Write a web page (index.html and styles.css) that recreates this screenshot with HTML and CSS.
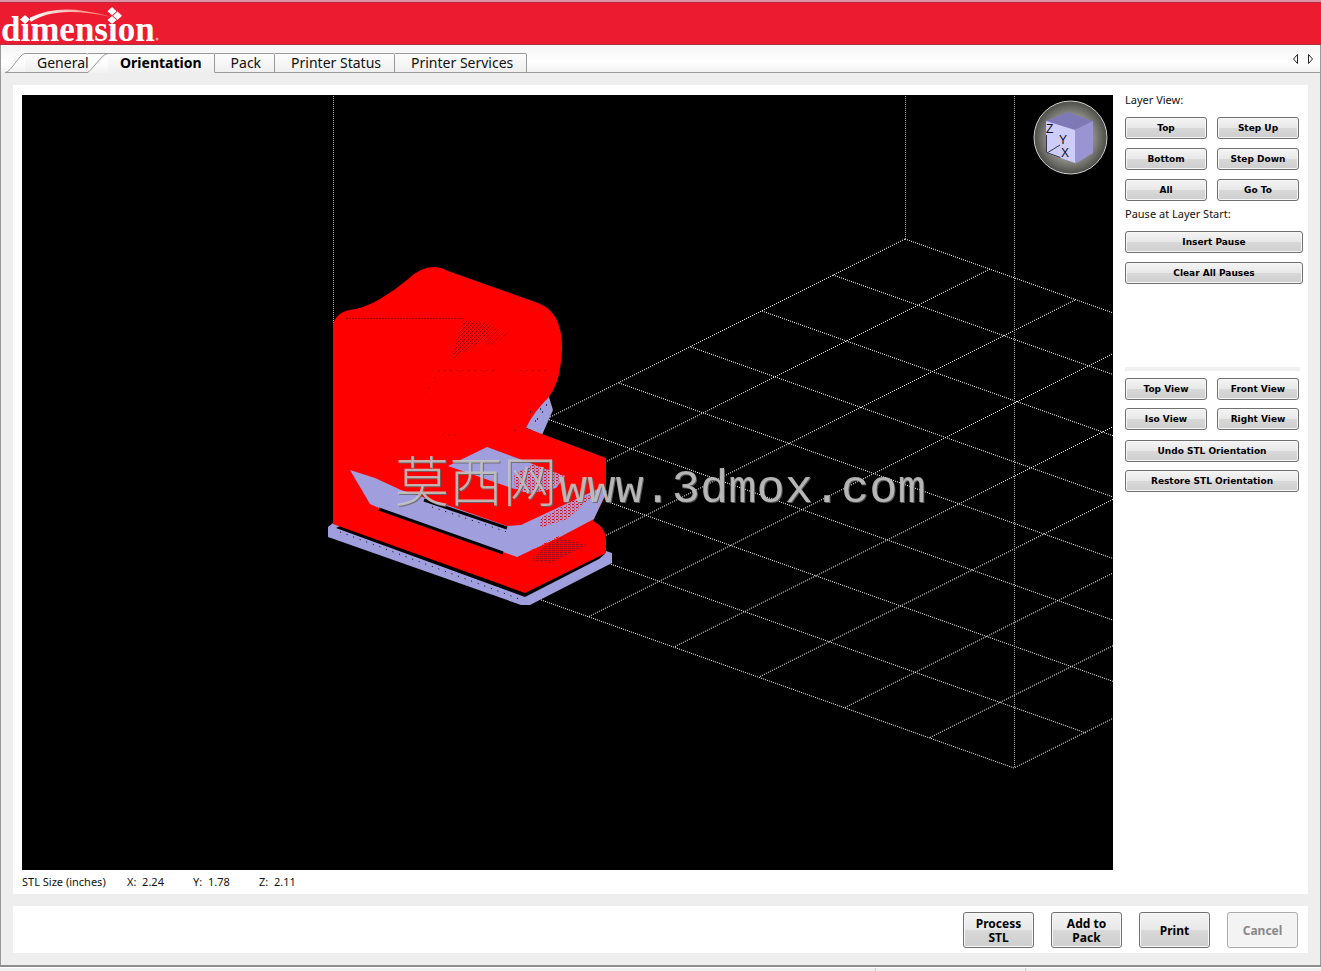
FILE: index.html
```html
<!DOCTYPE html>
<html lang="en">
<head>
<meta charset="utf-8">
<title>Dimension</title>
<link rel="stylesheet" href="styles.css">
</head>
<body>
<div class="window">
  <header class="brand">
    <svg class="logo" width="164" height="42" viewBox="0 3 164 42" role="img" aria-label="dimension">
      <defs>
        <linearGradient id="arc"><stop offset="0" stop-color="#fff"/><stop offset=".5" stop-color="#fbb9ae"/><stop offset="1" stop-color="#f4705f"/></linearGradient>
      </defs>
      <path d="M29 18Q54 6 84 11Q100 13 111 17Q88 12 70 12Q45 12 31 22Z" fill="url(#arc)"/>
      <text class="logo-text" x="1" y="41">dimension</text>
      <circle cx="157" cy="39" r="1.5" fill="#f79a98"/>
      <rect class="dot-mask" x="20" y="15" width="10" height="9"/>
      <rect class="dot-mask" x="109" y="15" width="10" height="9"/>
      <path d="M25 15l5 4.500-5 4.500-5-4.500zM112 7l4.500 4.200-4.500 4.200-4.500-4.200zM117.500 11.500l4.500 4.200-4.500 4.200-4.500-4.200zM112 16l4.500 4-4.500 4-4.500-4z" fill="#fff"/>
    </svg>
  </header>

  <nav class="tabs" aria-label="Sections">
    <svg class="slant" width="20" height="20" viewBox="0 0 20 20"><path d="M0 19.500H20M0 19.500Q3 19 5 16.500L15 4Q18 .5 20 .5" /></svg>
    <button class="tab first" type="button">General</button>
    <svg class="slant" width="20" height="20" viewBox="0 0 20 20"><path d="M0 .5H20M-1 19.500Q1 19 3 16.500L13 5Q17 .5 20 .5" /></svg>
    <button class="tab current" type="button">Orientation</button>
    <button class="tab" type="button">Pack</button>
    <button class="tab" type="button">Printer Status</button>
    <button class="tab" type="button">Printer Services</button>
    <div class="tab-rest">
      <button class="scroll" type="button" aria-label="Previous tab"><svg width="7" height="10" viewBox="0 0 7 10"><path d="M5.500 .5v9L1.500 5z"/></svg></button>
      <button class="scroll" type="button" aria-label="Next tab"><svg width="7" height="10" viewBox="0 0 7 10"><path d="M1.500 .5v9l4-4.500z"/></svg></button>
    </div>
  </nav>

  <div class="body">
  <main class="panel">
    <section class="stage">
      <svg class="view" viewBox="22 95 1091 775" role="img" aria-label="Model preview">
        <defs>
          <radialGradient id="ball"><stop offset="0" stop-color="#a8a8a4"/><stop offset=".6" stop-color="#92928a"/><stop offset="1" stop-color="#4c4c48"/></radialGradient>
          <pattern id="hatch" width="4" height="4" patternUnits="userSpaceOnUse"><path d="M0 4L4 0" stroke="#700" stroke-width=".8"/></pattern>
          <pattern id="speck" width="4" height="3" patternUnits="userSpaceOnUse"><path d="M0 .5h2M2 2h1" stroke="#f00"/></pattern>
          <pattern id="rows" width="4" height="2" patternUnits="userSpaceOnUse"><path d="M0 .5h3" stroke="#8c1020" stroke-width=".8"/></pattern>
        </defs>
        <rect x="22" y="95" width="1091" height="775"/>
        <g class="grid">
          <path class="across" d="M905 239l681 242M833 275l681 242M762 311l681 242M691 347l681 242M619 383l681 242M547 419l681 242M476 455l681 242M405 491l681 242M333 526l681 242"/>
          <path class="down" d="M905 239l-572 287M990 269l-572 287M1075 300l-572 287M1160 330l-572 287M1246 360l-572 287M1331 390l-572 287M1416 421l-572 287M1501 451l-572 287M1586 481l-572 287"/>
        </g>
        <g class="posts"><path d="M333.500 96V526M905.500 96V239M1014.500 96V768"/></g>

        <path fill="#a09edc" d="M328 527l5-4 9 4 183 66 81-42 6 2v10l-82 42h-9L328 537z"/>
        <path fill="#000" d="M336 528l4-2 186 66 77-39 2 1-6 5-74 38z"/>
        <path fill="#a09edc" d="M548 394l5 16-11 25-17-8 4-11 11-10z"/>
        <path fill="#f00" d="M333 524V328q0-9 7-14 5-4 16-5 12-3 24-10 14-8 27-19 13-13 27-13 7 0 14 4l90 32q16 6 21 23 5 15 2 36-2 22-13 36-15 15-22 30l80 30v39l-13 24q13 6 13 20v12l-81 40z"/>
        <path fill="#000" d="M607 493l-13 25 6 3 10-8z"/>
        <path fill="#a09edc" d="M448 466l39-19 78 29-9 12-27 6z"/>
        <path fill="url(#speck)" d="M514 475l24-14 28 15-24 20-27-3z"/>
        <path fill="#a09edc" d="M350 470l25 8 26 12 40 13 66 23 14-1 79-37 7 3-13 28-34 18-43 20-17-6-121-43-9-4z"/>
        <path fill="url(#speck)" d="M541 518l34-18 22-7-30 26-27 9zM522 555l36-19 31 2-36 18-33 11z"/>
        <path d="M379 509l124 44M424 500l83 28" stroke="#000" stroke-width="3" fill="none"/>
        <path d="M432 507l78 26M340 532l182 68" stroke="#000" stroke-dasharray="1 6" fill="none"/>
        <path fill="url(#rows)" d="M544 547l17-9 26 7-36 18-20-3z"/>
        <path fill="url(#hatch)" d="M463 320l27 4-3 14-35 21z"/>
        <path fill="url(#hatch)" fill-opacity=".5" d="M488 324l20 10-18 14-6-8z"/>
        <path d="M346 318.500H464" stroke="#900" stroke-dasharray="2 1"/>
        <path d="M438 370.500h56M520 370.500h28M425 394l12-20M442 435h16M514 431l8-6" stroke="#b00" stroke-dasharray="2 4" fill="none"/>
        <path d="M530 412h1M537 419h1M542 412h1M546 405h1M535 421h1M540 409h1" stroke="#113" stroke-width="1.500"/>

        <circle cx="1070.500" cy="137.500" r="36.500" fill="url(#ball)" stroke="#d0d0cc"/>
        <path fill="#7f79b8" d="M1046 121l22-9 25 9-20 10z"/>
        <path fill="#ceccf8" d="M1046 121l29 9v33l-29-10z"/>
        <path fill="#9a94d2" d="M1075 130l18-9v32l-18 11z"/>
        <path d="M1046.500 135v17.500l14 5M1047 153l13-8" stroke="#334" fill="none"/>
        <g class="axes"><text x="1046" y="133">Z</text><text x="1059" y="144">Y</text><text x="1061" y="157">X</text></g>
        <text class="mark"><tspan class="mark-cjk" x="395" y="502">莫西网</tspan><tspan class="mark-latin" x="559" y="502">www.3dmox.com</tspan></text>
      </svg>
      <div class="sizes"><span>STL Size (inches)</span><span>X:  2.24</span><span>Y:  1.78</span><span>Z:  2.11</span></div>
    </section>

    <aside class="side">
      <h2 class="caption">Layer View:</h2>
      <div class="pairs">
        <button class="btn" type="button">Top</button><button class="btn" type="button">Step Up</button>
        <button class="btn" type="button">Bottom</button><button class="btn" type="button">Step Down</button>
        <button class="btn" type="button">All</button><button class="btn" type="button">Go To</button>
      </div>
      <h2 class="caption">Pause at Layer Start:</h2>
      <div class="stack pauses">
        <button class="btn" type="button">Insert Pause</button>
        <button class="btn" type="button">Clear All Pauses</button>
      </div>
      <hr class="rule">
      <div class="pairs views">
        <button class="btn" type="button">Top View</button><button class="btn" type="button">Front View</button>
        <button class="btn" type="button">Iso View</button><button class="btn" type="button">Right View</button>
      </div>
      <div class="stack orient">
        <button class="btn" type="button">Undo STL Orientation</button>
        <button class="btn" type="button">Restore STL Orientation</button>
      </div>
    </aside>
  </main>

  <footer class="actions">
    <button class="btn big" type="button">Process STL</button>
    <button class="btn big" type="button">Add to Pack</button>
    <button class="btn big" type="button">Print</button>
    <button class="btn big" type="button" disabled>Cancel</button>
  </footer>
  </div>
</div>
<div class="status"><span></span><span></span><span></span></div>
</body>
</html>
```
FILE: styles.css
```css
* { box-sizing: border-box; }
body {
  margin: 0;
  min-height: 100vh;
  display: flex;
  flex-direction: column;
  background: #f0f0f0;
  color: #111;
  font-family: "Noto Sans", "Noto Sans CJK SC", sans-serif;
}
svg { display: block; flex: none; }
button { font-family: inherit; color: inherit; margin: 0; }

.window {
  display: flex;
  flex-direction: column;
  border-top: 2px solid #dc92a4;
  border-bottom: 2px solid #8e8e8e;
  background: #eee;
}
.brand {
  height: 43px;
  border-top: 1px solid #b8283c;
  border-bottom: 1px solid #a83244;
  background: #ec1b30;
}
.logo { overflow: visible; }
.logo-text { font: bold 35px "Liberation Serif", serif; fill: #fff; }
.dot-mask { fill: #ec1b30; }

.tabs {
  display: flex;
  align-items: flex-end;
  height: 28px;
  padding-left: 4px;
  border-left: 1px solid #999;
  border-right: 1px solid #999;
  background: linear-gradient(#f4f4f4, #fff 60%, #f1f1f1);
}
.slant path { fill: none; stroke: #999; }
.tab {
  height: 20px;
  padding: 0 13px 0 16px;
  border: 1px solid #999;
  border-left: 0;
  border-radius: 0 2px 0 0;
  background: linear-gradient(#fdfdfd, #efefef);
  font-size: 14px;
  line-height: 18px;
  white-space: nowrap;
}
.tab.first { padding: 0 0 0 12px; border-right: 0; width: 63px; text-align: left; }
.tab.current { padding: 0 12px 0 12px; border-bottom-color: #efefef; font-weight: bold; color: #000; }
.tab-rest {
  flex: 1;
  display: flex;
  justify-content: flex-end;
  align-items: center;
  gap: 8px;
  height: 28px;
  padding-right: 6px;
  border-bottom: 1px solid #999;
}
.scroll { padding: 0; border: 0; background: none; }
.scroll path { fill: #fff; stroke: #222; }

.body {
  display: flex;
  flex-direction: column;
  gap: 12px;
  padding: 12px 12px;
  border-left: 1px solid #999;
  border-right: 1px solid #999;
}
.panel { display: flex; background: #fff; padding: 10px 5px 4px 9px; }
.stage { flex: 1; min-width: 0; }
.view { width: 100%; height: auto; }
.grid path, .posts path { fill: none; stroke: #fff; }
.across { stroke-dasharray: 1.061 1.061; }
.down { stroke-dasharray: 1.119 1.119; }
.posts path { stroke: #aaa; stroke-dasharray: 1 1; shape-rendering: crispEdges; }
.axes { font: 12px "Liberation Sans", sans-serif; fill: #112; }
.mark { fill: #c8c8c8; fill-opacity: .85; filter: drop-shadow(1px 1px 0 #666); }
.mark-cjk { font: 300 54px "Noto Sans CJK SC", sans-serif; }
.mark-latin { font: 47px "Liberation Mono", monospace; }

.sizes {
  display: grid;
  grid-template-columns: 105px 66px 66px auto;
  height: 20px;
  padding-top: 2px;
  font-size: 11px;
  line-height: 20px;
  white-space: pre;
}

.side { width: 190px; padding-left: 12px; }
.caption { margin: 0; font-size: 11px; line-height: 10px; font-weight: normal; }
.pairs { display: grid; grid-template-columns: 82px 82px; gap: 9px 10px; margin: 12px 0 8px; }
.stack { display: grid; gap: 9px; }
.pauses { margin-top: 12px; }
.btn {
  height: 22px;
  padding: 0;
  border: 1px solid #707070;
  border-radius: 3px;
  background: linear-gradient(#f4f4f4, #e8e8e8 48%, #d8d8d8 52%, #cecece);
  box-shadow: inset 0 0 0 1px #f7f7f7;
  font: bold 9px/14px "DejaVu Sans", sans-serif;
  color: #000;
}
.rule { height: 4px; margin: 83px 3px 7px 0; border: 0; background: #f0f0f0; }
.views { margin: 0 0 10px; gap: 8px 10px; }
.orient { margin-right: 4px; gap: 8px; }

.actions {
  display: flex;
  justify-content: flex-end;
  gap: 17px;
  padding: 6px 10px 5px;
  background: #fff;
}
.big { width: 71px; height: 36px; padding: 2px 8px 0; font: bold 12px/14px "Noto Sans", sans-serif; }
.big:disabled { border-color: #aaa; background: #f3f3f3; color: #888; }

.status { display: flex; flex: 1; border-top: 1px solid #fff; }
.status span { flex: 1; border-right: 1px solid #ccc; }
.status span:first-child { flex: none; width: 876px; }
.status span:nth-child(2) { flex: none; width: 150px; }
.status span:last-child { border: 0; }
```
